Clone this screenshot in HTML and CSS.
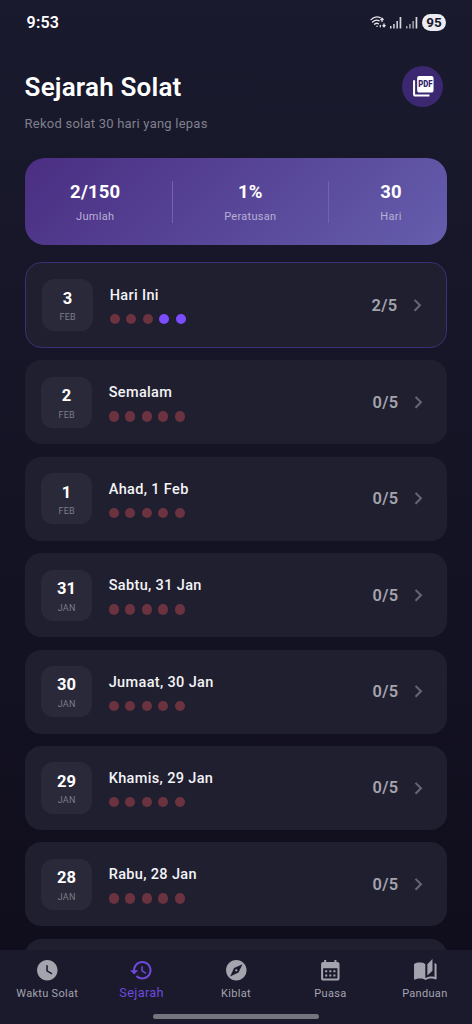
FILE: index.html
```html
<!DOCTYPE html>
<html lang="ms">
<head>
<meta charset="utf-8">
<meta name="viewport" content="width=device-width, initial-scale=1">
<title>Sejarah Solat</title>
<link rel="stylesheet" href="styles.css">
</head>
<body>
<div class="screen">
  <div class="statusbar">
    <span class="clock">9:53</span>
    <div class="status-icons">
      <svg class="wifi" viewBox="0 0 16 14" fill="none" stroke="#e4e4ea" stroke-width="1.3" stroke-linecap="round">
        <path d="M1 4.600C3.800 1.900 7.500 1.400 10.200 2.600M2.600 7c2-1.900 4.500-2.200 6.600-1.200M4.500 9.200c1.200-1 2.700-1.200 4-.4"/>
        <circle cx="7" cy="11.300" r=".8" fill="#e4e4ea" stroke="none"/>
        <path d="M12 6.500V3.200M10.800 4.600L12 3.200l1.200 1.400M10.300 10.500v1.300M14 8.800v2.800M12.900 10.500l1.100 1.200 1.100-1.200"/>
      </svg>
      <svg class="signal" viewBox="0 0 12 13" fill="#d6d6dd"><path d="M0 10h1.500v2.500H0zM3.200 8h1.500v4.500H3.200zM6.400 5h1.500v7.500H6.400zM9.600 1h1.700v11.500H9.600z"/></svg>
      <svg class="signal" viewBox="0 0 12 13" fill="#a2a2ad"><path d="M0 10h1.500v2.500H0zM3.200 8h1.500v4.500H3.200zM6.400 5h1.500v7.500H6.400z"/><path fill="#d6d6dd" d="M9.600 1h1.700v11.500H9.600z"/></svg>
      <span class="battery">95</span>
    </div>
  </div>

  <header class="header">
    <div>
      <h1 class="title">Sejarah Solat</h1>
      <p class="subtitle">Rekod solat 30 hari yang lepas</p>
    </div>
    <button class="pdf" aria-label="PDF">
      <svg viewBox="0 0 24 24">
        <path fill="#fff" d="M20 2H8c-1.100 0-2 .9-2 2v12c0 1.100.9 2 2 2h12c1.100 0 2-.9 2-2V4c0-1.100-.9-2-2-2zM4 6H2v14c0 1.100.9 2 2 2h14v-2H4z"/>
        <text class="pdf-text" x="14.100" y="13" text-anchor="middle" textLength="14" lengthAdjust="spacingAndGlyphs">PDF</text>
      </svg>
    </button>
  </header>

  <section class="summary">
    <div class="stat"><b>2/150</b><span>Jumlah</span></div>
    <i class="rule"></i>
    <div class="stat"><b>1%</b><span>Peratusan</span></div>
    <i class="rule"></i>
    <div class="stat"><b>30</b><span>Hari</span></div>
  </section>

  <main class="list" id="list"></main>

  <nav class="nav">
    <a class="tab"><svg viewBox="0 0 24 24"><path d="M12 2C6.500 2 2 6.500 2 12s4.500 10 10 10 10-4.500 10-10S17.500 2 12 2zm4.200 14.200L11 13V7h1.500v5.200l4.500 2.700-.8 1.300z"/></svg><span>Waktu Solat</span></a>
    <a class="tab active"><svg viewBox="0 0 24 24"><path d="M13 3c-4.970 0-9 4.030-9 9H1l3.890 3.890.07.14L9 12H6c0-3.870 3.130-7 7-7s7 3.130 7 7-3.130 7-7 7c-1.930 0-3.680-.79-4.940-2.060l-1.420 1.420C8.270 19.990 10.510 21 13 21c4.970 0 9-4.030 9-9s-4.030-9-9-9zm-1 5v5l4.280 2.540.72-1.210-3.500-2.080V8H12z"/></svg><span>Sejarah</span></a>
    <a class="tab"><svg viewBox="0 0 24 24"><path d="M12 10.900c-.61 0-1.100.49-1.100 1.100s.49 1.100 1.100 1.100c.61 0 1.100-.49 1.100-1.100s-.49-1.100-1.100-1.100zM12 2C6.480 2 2 6.480 2 12s4.480 10 10 10 10-4.480 10-10S17.520 2 12 2zm2.190 12.190L6 18l3.810-8.190L18 6l-3.810 8.190z"/></svg><span>Kiblat</span></a>
    <a class="tab"><svg viewBox="0 0 24 24"><path d="M19 4h-1V2h-2v2H8V2H6v2H5c-1.110 0-1.990.9-1.990 2L3 20c0 1.100.89 2 2 2h14c1.100 0 2-.9 2-2V6c0-1.100-.9-2-2-2zm0 16H5V10h14v10zM9 14H7v-2h2v2zm4 0h-2v-2h2v2zm4 0h-2v-2h2v2zm-8 4H7v-2h2v2zm4 0h-2v-2h2v2zm4 0h-2v-2h2v2z"/></svg><span>Puasa</span></a>
    <a class="tab"><svg viewBox="0 0 24 24"><path d="M19 1l-5 5v11l5-4.500V1zM1 6v14.650c0 .25.25.5.5.5.1 0 .15-.05.25-.05C3.100 20.450 5.050 20 6.500 20c1.950 0 4.050.4 5.500 1.500V6c-1.450-1.100-3.550-1.500-5.500-1.500S2.450 4.900 1 6zm22 13.500V6c-.6-.45-1.250-.75-2-1v13.500c-1.100-.35-2.300-.5-3.500-.5-1.700 0-4.150.65-5.500 1.500v2c1.350-.85 3.800-1.500 5.500-1.500 1.650 0 3.350.3 4.750 1.050.1.05.15.05.25.05.25 0 .5-.25.5-.5v-1.100z"/></svg><span>Panduan</span></a>
    <i class="handle"></i>
  </nav>
</div>
<script src="app.js"></script>
</body>
</html>
```

FILE: styles.css
```css
* { box-sizing: border-box; }
body { margin: 0; font-family: Roboto, "Liberation Sans", sans-serif; color: #fff; }

.screen {
  position: relative;
  width: 472px;
  height: 1024px;
  overflow: hidden;
  padding: 0 24.600px;
  background: linear-gradient(#1a1a2e, #0f0d1b);
}

.statusbar {
  display: flex;
  justify-content: space-between;
  align-items: center;
  height: 44px;
  padding: 0 1.400px 0 2px;
}
.clock { padding-top: 1px; font-size: 16px; font-weight: 600; letter-spacing: .2px; line-height: 20px; }
.status-icons { display: flex; align-items: center; gap: 4px; }
.wifi { width: 16px; height: 14px; }
.signal { width: 12px; height: 13px; }
.battery {
  width: 24px;
  height: 17px;
  border-radius: 9px;
  background: #ececf2;
  color: #1a1a2e;
  font-size: 13.500px;
  font-weight: 700;
  line-height: 17.500px;
  text-align: center;
}

.header {
  display: flex;
  justify-content: space-between;
  height: 114px;
  padding: 22px 4px 0 0;
}
.title { margin: 5px 0 0; font-size: 26px; font-weight: 600; line-height: 32px; letter-spacing: .2px; }
.subtitle { margin: 13px 0 0; font-size: 13px; line-height: 16px; letter-spacing: .23px; color: #80808c; }
.pdf {
  display: grid;
  place-items: center;
  width: 41px;
  height: 41px;
  padding: 0;
  border: 0;
  border-radius: 50%;
  background: #3b2870;
}
.pdf svg { width: 24.600px; height: 24.600px; }
.pdf-text { font: 900 8.400px Roboto, sans-serif; fill: #35246a; }

.summary {
  display: flex;
  justify-content: space-between;
  align-items: center;
  height: 87px;
  padding: 0 45.500px;
  border-radius: 20px;
  background: linear-gradient(135deg, #4a2e82, #655dad);
}
.stat { display: flex; flex-direction: column; align-items: center; }
.stat b { font-size: 18.500px; font-weight: 700; line-height: 24px; letter-spacing: .2px; }
.stat span { margin-top: 6px; font-size: 11px; line-height: 14px; letter-spacing: .3px; color: #b9afd6; }
.rule { width: 1px; height: 42px; background: #7163ae; }

.list { display: flex; flex-direction: column; gap: 12.400px; padding-top: 17px; }
.card {
  display: flex;
  align-items: center;
  flex: none;
  height: 84px;
  padding: 0 16.400px;
  border-radius: 16.400px;
  background: #201f30;
}
.card.today { height: 86px; border: 1.500px solid #3b2f75; }
.date {
  display: flex;
  flex-direction: column;
  align-items: center;
  width: 51.300px;
  height: 51.300px;
  padding-top: 9.500px;
  border-radius: 12.300px;
  background: #2a293a;
}
.date b { font-size: 16.500px; font-weight: 700; line-height: 20px; letter-spacing: .2px; }
.date span { margin-top: 2.500px; font-size: 9px; line-height: 12px; letter-spacing: .2px; color: #7d7c88; }
.info { flex: 1; padding: 1.500px 0 0 16.400px; }
.name { font-size: 14.500px; font-weight: 500; line-height: 18px; letter-spacing: .35px; color: #f4f4f7; }
.dots { display: flex; gap: 6.200px; margin-top: 9px; }
.dot { width: 10.300px; height: 10.300px; border-radius: 50%; background: #6b323f; }
.dot.done { background: #7c4dff; }
.score { font-size: 16.400px; font-weight: 600; letter-spacing: .3px; color: #a4a4ad; }
.chevron { width: 24.600px; height: 24.600px; margin-left: 8px; fill: #666672; }

.nav {
  position: absolute;
  left: 0;
  bottom: 0;
  display: flex;
  width: 472px;
  height: 74px;
  background: #1a1a2c;
}
.tab { flex: 1; display: flex; flex-direction: column; align-items: center; padding-top: 8px; color: #a4a4ae; }
.tab svg { width: 24.600px; height: 24.600px; fill: currentColor; }
.tab span { margin-top: 3px; font-size: 11px; line-height: 15px; letter-spacing: .3px; white-space: nowrap; }
.tab.active { color: #6e49dc; }
.tab.active span { margin-top: 2px; font-size: 12.700px; letter-spacing: .35px; }
.handle {
  position: absolute;
  left: 153px;
  bottom: 5.500px;
  width: 166px;
  height: 4.500px;
  border-radius: 3px;
  background: #74747f;
}
```

FILE: app.js
```js
const days = [
  ["3", "FEB", "Hari Ini", [0, 0, 0, 1, 1]],
  ["2", "FEB", "Semalam", [0, 0, 0, 0, 0]],
  ["1", "FEB", "Ahad, 1 Feb", [0, 0, 0, 0, 0]],
  ["31", "JAN", "Sabtu, 31 Jan", [0, 0, 0, 0, 0]],
  ["30", "JAN", "Jumaat, 30 Jan", [0, 0, 0, 0, 0]],
  ["29", "JAN", "Khamis, 29 Jan", [0, 0, 0, 0, 0]],
  ["28", "JAN", "Rabu, 28 Jan", [0, 0, 0, 0, 0]]
];

const cards = days.map(([day, month, name, prayers], i) => `
  <article class="card${i === 0 ? " today" : ""}">
    <div class="date"><b>${day}</b><span>${month}</span></div>
    <div class="info">
      <div class="name">${name}</div>
      <div class="dots">${prayers.map(p => `<i class="dot${p ? " done" : ""}"></i>`).join("")}</div>
    </div>
    <span class="score">${prayers.filter(Boolean).length}/5</span>
    <svg class="chevron" viewBox="0 0 24 24"><path d="M10 6L8.590 7.410 13.170 12l-4.580 4.590L10 18l6-6z"/></svg>
  </article>`);

// The next card only peeks out above the tab bar.
cards.push('<article class="card"></article>');
document.getElementById("list").innerHTML = cards.join("");
```
